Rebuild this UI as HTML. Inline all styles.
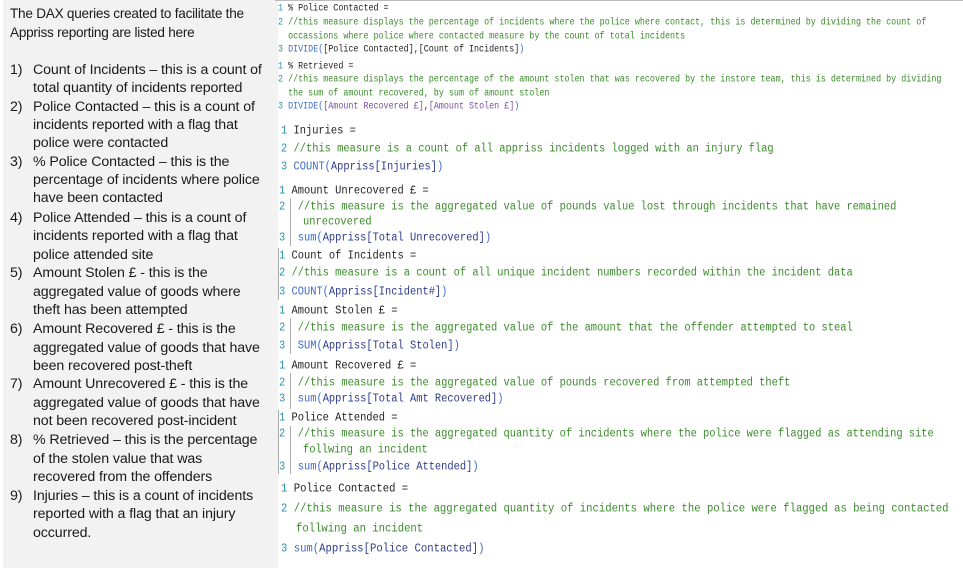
<!DOCTYPE html>
<html><head><meta charset="utf-8"><style>
body{margin:0;width:963px;height:571px;background:#fff;position:relative;overflow:hidden;font-family:"Liberation Sans",sans-serif}
#left{position:absolute;left:3px;top:0;width:275px;height:568px;background:#f2f2f2}
.t{position:absolute;white-space:nowrap;font-size:14.2px;color:#1a1a1a;letter-spacing:-0.1px;line-height:16px}
.c{position:absolute;white-space:nowrap;font-family:"Liberation Mono",monospace;color:#222;line-height:12px;transform:scaleY(1.15);transform-origin:0 50%}
.s{font-size:8.4px}.b{font-size:10.4px}
.n{color:#2b91af}.g{color:#3a8c2a}.k{color:#3b6ac8}.p{color:#7a4ca8}.d{color:#2e3b8a}
.bar{position:absolute;width:1px;background:#aaa}
</style></head><body>
<div id="left"></div>
<div class="t" style="left:10px;top:6px;font-size:13.6px;letter-spacing:-0.25px">The DAX queries created to facilitate the</div>
<div class="t" style="left:10px;top:25px;font-size:13.6px;letter-spacing:-0.25px">Appriss reporting are listed here</div>
<div class="t" style="left:10px;top:62px">1)</div><div class="t" style="left:33px;top:62px">Count of Incidents – this is a count of</div>
<div class="t" style="left:33px;top:80px">total quantity of incidents reported</div>
<div class="t" style="left:10px;top:99px">2)</div><div class="t" style="left:33px;top:99px">Police Contacted – this is a count of</div>
<div class="t" style="left:33px;top:117px">incidents reported with a flag that</div>
<div class="t" style="left:33px;top:135px">police were contacted</div>
<div class="t" style="left:10px;top:154px">3)</div><div class="t" style="left:33px;top:154px">% Police Contacted – this is the</div>
<div class="t" style="left:33px;top:172px">percentage of incidents where police</div>
<div class="t" style="left:33px;top:190px">have been contacted</div>
<div class="t" style="left:10px;top:210px">4)</div><div class="t" style="left:33px;top:210px">Police Attended – this is a count of</div>
<div class="t" style="left:33px;top:228px">incidents reported with a flag that</div>
<div class="t" style="left:33px;top:247px">police attended site</div>
<div class="t" style="left:10px;top:265px">5)</div><div class="t" style="left:33px;top:265px">Amount Stolen £ - this is the</div>
<div class="t" style="left:33px;top:284px">aggregated value of goods where</div>
<div class="t" style="left:33px;top:302px">theft has been attempted</div>
<div class="t" style="left:10px;top:321px">6)</div><div class="t" style="left:33px;top:321px">Amount Recovered £ - this is the</div>
<div class="t" style="left:33px;top:340px">aggregated value of goods that have</div>
<div class="t" style="left:33px;top:358px">been recovered post-theft</div>
<div class="t" style="left:10px;top:376px">7)</div><div class="t" style="left:33px;top:376px">Amount Unrecovered £ - this is the</div>
<div class="t" style="left:33px;top:395px">aggregated value of goods that have</div>
<div class="t" style="left:33px;top:413px">not been recovered post-incident</div>
<div class="t" style="left:10px;top:432px">8)</div><div class="t" style="left:33px;top:432px">% Retrieved – this is the percentage</div>
<div class="t" style="left:33px;top:451px">of the stolen value that was</div>
<div class="t" style="left:33px;top:469px">recovered from the offenders</div>
<div class="t" style="left:10px;top:488px">9)</div><div class="t" style="left:33px;top:488px">Injuries – this is a count of incidents</div>
<div class="t" style="left:33px;top:506px">reported with a flag that an injury</div>
<div class="t" style="left:33px;top:525px">occurred.</div>

<div style="position:absolute;left:275px;top:0;width:688px;height:1px;background:#bbb"></div>

<div class="c s" style="left:278px;top:2px"><span class="n">1</span> % Police Contacted =</div>
<div class="c s" style="left:278px;top:16px"><span class="n">2</span> <span class="g">//this measure displays the percentage of incidents where the police where contact, this is determined by dividing the count of</span></div>
<div class="c s" style="left:278px;top:30px">&nbsp; <span class="g">occassions where police where contacted measure by the count of total incidents</span></div>
<div class="c s" style="left:278px;top:43px"><span class="n">3</span> <span class="k">DIVIDE(</span>[Police Contacted],[Count of Incidents]<span class="k">)</span></div>

<div class="c s" style="left:278px;top:60px"><span class="n">1</span> % Retrieved =</div>
<div class="c s" style="left:278px;top:73px"><span class="n">2</span> <span class="g">//this measure displays the percentage of the amount stolen that was recovered by the instore team, this is determined by dividing</span></div>
<div class="c s" style="left:278px;top:87px">&nbsp; <span class="g">the sum of amount recovered, by sum of amount stolen</span></div>
<div class="c s" style="left:278px;top:100px"><span class="n">3</span> <span class="k">DIVIDE(</span><span class="p">[Amount Recovered £]</span>,<span class="p">[Amount Stolen £]</span><span class="k">)</span></div>

<div class="c b" style="left:281px;top:125px"><span class="n">1</span> Injuries =</div>
<div class="c b" style="left:281px;top:143px"><span class="n">2</span> <span class="g">//this measure is a count of all appriss incidents logged with an injury flag</span></div>
<div class="c b" style="left:281px;top:161px"><span class="n">3</span> <span class="k">COUNT(</span><span class="d">Appriss[Injuries]</span><span class="k">)</span></div>

<div class="c b" style="left:279px;top:185px"><span class="n">1</span> Amount Unrecovered £ =</div>
<div class="bar" style="left:290px;top:198px;height:48px"></div>
<div class="c b" style="left:279px;top:201px"><span class="n">2</span>&nbsp;&nbsp;<span class="g">//this measure is the aggregated value of pounds value lost through incidents that have remained</span></div>
<div class="c b" style="left:303px;top:216px"><span class="g">unrecovered</span></div>
<div class="c b" style="left:279px;top:232px"><span class="n">3</span>&nbsp;&nbsp;<span class="k">sum(</span><span class="d">Appriss[Total Unrecovered]</span><span class="k">)</span></div>

<div class="bar" style="left:278px;top:248px;height:52px"></div>
<div class="c b" style="left:279px;top:250px"><span class="n">1</span> Count of Incidents =</div>
<div class="c b" style="left:279px;top:267px"><span class="n">2</span> <span class="g">//this measure is a count of all unique incident numbers recorded within the incident data</span></div>
<div class="c b" style="left:279px;top:286px"><span class="n">3</span> <span class="k">COUNT(</span><span class="d">Appriss[Incident#]</span><span class="k">)</span></div>

<div class="c b" style="left:279px;top:305px"><span class="n">1</span> Amount Stolen £ =</div>
<div class="bar" style="left:290px;top:318px;height:36px"></div>
<div class="c b" style="left:279px;top:322px"><span class="n">2</span>&nbsp;&nbsp;<span class="g">//this measure is the aggregated value of the amount that the offender attempted to steal</span></div>
<div class="c b" style="left:279px;top:340px"><span class="n">3</span>&nbsp;&nbsp;<span class="k">SUM(</span><span class="d">Appriss[Total Stolen]</span><span class="k">)</span></div>

<div class="c b" style="left:279px;top:360px"><span class="n">1</span> Amount Recovered £ =</div>
<div class="bar" style="left:290px;top:373px;height:36px"></div>
<div class="c b" style="left:279px;top:377px"><span class="n">2</span>&nbsp;&nbsp;<span class="g">//this measure is the aggregated value of pounds recovered from attempted theft</span></div>
<div class="c b" style="left:279px;top:393px"><span class="n">3</span>&nbsp;&nbsp;<span class="k">sum(</span><span class="d">Appriss[Total Amt Recovered]</span><span class="k">)</span></div>

<div class="bar" style="left:278px;top:410px;height:64px"></div>
<div class="bar" style="left:290px;top:426px;height:48px"></div>
<div class="c b" style="left:279px;top:412px"><span class="n">1</span> Police Attended =</div>
<div class="c b" style="left:279px;top:428px"><span class="n">2</span>&nbsp;&nbsp;<span class="g">//this measure is the aggregated quantity of incidents where the police were flagged as attending site</span></div>
<div class="c b" style="left:303px;top:444px"><span class="g">follwing an incident</span></div>
<div class="c b" style="left:279px;top:461px"><span class="n">3</span>&nbsp;&nbsp;<span class="k">sum(</span><span class="d">Appriss[Police Attended]</span><span class="k">)</span></div>

<div class="c b" style="left:281px;top:483px;font-size:10.6px"><span class="n">1</span> Police Contacted =</div>
<div class="c b" style="left:281px;top:503px;font-size:10.6px"><span class="n">2</span> <span class="g">//this measure is the aggregated quantity of incidents where the police were flagged as being contacted</span></div>
<div class="c b" style="left:296px;top:523px;font-size:10.6px"><span class="g">follwing an incident</span></div>
<div class="c b" style="left:281px;top:543px;font-size:10.6px"><span class="n">3</span> <span class="k">sum(</span><span class="d">Appriss[Police Contacted]</span><span class="k">)</span></div>
</body></html>
